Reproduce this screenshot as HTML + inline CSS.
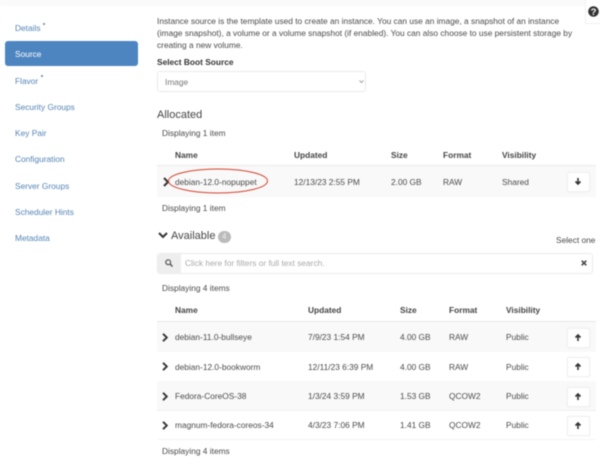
<!DOCTYPE html>
<html><head><meta charset="utf-8"><style>
html,body{margin:0;padding:0;background:#fff}
#p{position:relative;width:600px;height:468px;overflow:hidden;background:#fff;font-family:"Liberation Sans",sans-serif;font-size:8.35px;color:#4a4a4a;filter:blur(.4px)}
#p div{position:absolute}
.t{white-space:nowrap;line-height:12px;height:12px}
.n{color:#5585b5;font-size:8.35px}
.b{font-weight:bold;color:#444}
.h{font-size:11px;line-height:14px;height:14px;color:#444}
.row{left:157px;width:439px}
.btn{left:567px;width:21px;height:18px;background:#fff;border:1px solid #f0f0f0;border-radius:2px;box-shadow:0 0 1px #e4e4e4}
.dot{width:2px;height:2px;border-radius:1px;background:#5a7fa8}
svg{position:absolute;overflow:visible}
</style></head><body><div id="p">
<div style="left:0;top:0;width:600px;height:6px;background:#fafafa"></div>
<div style="left:585px;top:0;width:15px;height:23px;background:#fff;border-left:1px solid #f0f0f0;border-bottom:1px solid #f0f0f0"></div>
<svg style="left:588px;top:6px" width="11" height="11" viewBox="0 0 11 11"><circle cx="5.5" cy="5.5" r="5.3" fill="#333"/><text x="5.5" y="9" font-family="Liberation Sans" font-size="9.5" font-weight="bold" fill="#fff" text-anchor="middle">?</text></svg>

<div class="t n" style="left:15px;top:22px">Details</div><div class="dot" style="left:43px;top:23px"></div>
<div style="left:5px;top:41px;width:133px;height:25px;background:#4d85c0;border-radius:3px"></div>
<div class="t n" style="left:15px;top:48px;color:#fff">Source</div>
<div class="t n" style="left:15px;top:75px">Flavor</div><div class="dot" style="left:41px;top:75px"></div>
<div class="t n" style="left:15px;top:101px">Security Groups</div>
<div class="t n" style="left:15px;top:127px">Key Pair</div>
<div class="t n" style="left:15px;top:153px">Configuration</div>
<div class="t n" style="left:15px;top:180px">Server Groups</div>
<div class="t n" style="left:15px;top:206px">Scheduler Hints</div>
<div class="t n" style="left:15px;top:232px">Metadata</div>

<div class="t" style="left:157px;top:15px">Instance source is the template used to create an instance. You can use an image, a snapshot of an instance</div>
<div class="t" style="left:157px;top:27px">(image snapshot), a volume or a volume snapshot (if enabled). You can also choose to use persistent storage by</div>
<div class="t" style="left:157px;top:39px">creating a new volume.</div>
<div class="t b" style="left:157px;top:56px;color:#333">Select Boot Source</div>
<div style="left:157px;top:71px;width:207px;height:19px;border:1px solid #ebebeb;border-radius:3px"></div>
<div class="t" style="left:165px;top:76px;color:#777">Image</div>
<svg style="left:359px;top:80px" width="5" height="3" viewBox="0 0 5 3"><path d="M.5 .5L2.5 2.5L4.5 .5" fill="none" stroke="#888" stroke-width=".8"/></svg>

<div class="t h" style="left:157px;top:108px">Allocated</div>
<div class="t" style="left:162px;top:127px">Displaying 1 item</div>
<div class="t b" style="left:175px;top:149px">Name</div><div class="t b" style="left:294px;top:149px">Updated</div><div class="t b" style="left:391px;top:149px">Size</div><div class="t b" style="left:443px;top:149px">Format</div><div class="t b" style="left:502px;top:149px">Visibility</div>
<div class="row" style="top:165px;height:31px;background:#f9f9f9;border-top:1px solid #eaeaea"></div>
<svg style="left:163px;top:177px" width="7" height="10" viewBox="0 0 7 10"><path d="M1 1L5 5L1 9" fill="none" stroke="#333" stroke-width="2"/></svg>
<div class="t" style="left:175px;top:176px">debian-12.0-nopuppet</div>
<div class="t" style="left:294px;top:176px">12/13/23 2:55 PM</div><div class="t" style="left:391px;top:176px">2.00 GB</div><div class="t" style="left:443px;top:176px">RAW</div><div class="t" style="left:502px;top:176px">Shared</div>
<div class="btn" style="top:172px"></div>
<svg style="left:574px;top:177px" width="8" height="9" viewBox="0 0 8 9"><path d="M4 1V7M1.5 4.5L4 7L6.5 4.5" fill="none" stroke="#333" stroke-width="1.6"/></svg>
<svg style="left:168px;top:168px" width="101" height="26" viewBox="0 0 101 26"><ellipse cx="50" cy="13" rx="49.5" ry="12" fill="none" stroke="#d5432f" stroke-width="1"/></svg>
<div class="t" style="left:162px;top:202px">Displaying 1 item</div>

<svg style="left:158px;top:232px" width="10" height="7" viewBox="0 0 10 7"><path d="M1 1L5 5L9 1" fill="none" stroke="#333" stroke-width="2"/></svg>
<div class="t h" style="left:171px;top:229px">Available</div>
<div style="left:218px;top:231px;width:13px;height:12px;background:#bbb;border-radius:6px"></div>
<div class="t" style="left:222px;top:231px;color:#eee;font-size:8px">4</div>
<div class="t" style="left:556px;top:234px">Select one</div>
<div style="left:157px;top:253px;width:434px;height:19px;border:1px solid #ebebeb;border-radius:3px"></div>
<div style="left:158px;top:254px;width:23px;height:19px;background:#eee;border-radius:3px 0 0 3px"></div>
<svg style="left:165px;top:259px" width="8" height="8" viewBox="0 0 8 8"><circle cx="3.2" cy="3.2" r="2.4" fill="none" stroke="#555" stroke-width="1.2"/><path d="M5 5L7.5 7.5" stroke="#555" stroke-width="1.5"/></svg>
<div class="t" style="left:185px;top:257px;color:#aaa">Click here for filters or full text search.</div>
<svg style="left:581px;top:260px" width="6" height="6" viewBox="0 0 6 6"><path d="M.7 .7L5.3 5.3M5.3 .7L.7 5.3" stroke="#444" stroke-width="1.5"/></svg>
<div class="t" style="left:162px;top:282px">Displaying 4 items</div>
<div class="t b" style="left:175px;top:304px">Name</div><div class="t b" style="left:308px;top:304px">Updated</div><div class="t b" style="left:400px;top:304px">Size</div><div class="t b" style="left:449px;top:304px">Format</div><div class="t b" style="left:506px;top:304px">Visibility</div>

<div class="row" style="top:321px;height:30px;background:#f9f9f9;border-top:1px solid #e8e8e8"></div>
<div class="row" style="top:381px;height:29px;background:#f9f9f9;border-bottom:1px solid #f0f0f0"></div>

<svg style="left:162px;top:333px" width="7" height="9" viewBox="0 0 7 9"><path d="M1 .8L4.8 4.5L1 8.2" fill="none" stroke="#333" stroke-width="1.9"/></svg>
<div class="t" style="left:175px;top:331px">debian-11.0-bullseye</div><div class="t" style="left:308px;top:331px">7/9/23 1:54 PM</div><div class="t" style="left:400px;top:331px">4.00 GB</div><div class="t" style="left:449px;top:331px">RAW</div><div class="t" style="left:506px;top:331px">Public</div>
<div class="btn" style="top:328px"></div>
<svg style="left:574px;top:333px" width="8" height="9" viewBox="0 0 8 9"><path d="M4 8V2M1.5 4.5L4 2L6.5 4.5" fill="none" stroke="#333" stroke-width="1.6"/></svg>

<svg style="left:162px;top:362px" width="7" height="9" viewBox="0 0 7 9"><path d="M1 .8L4.8 4.5L1 8.2" fill="none" stroke="#333" stroke-width="1.9"/></svg>
<div class="t" style="left:175px;top:361px">debian-12.0-bookworm</div><div class="t" style="left:308px;top:361px">12/11/23 6:39 PM</div><div class="t" style="left:400px;top:361px">4.00 GB</div><div class="t" style="left:449px;top:361px">RAW</div><div class="t" style="left:506px;top:361px">Public</div>
<div class="btn" style="top:357px"></div>
<svg style="left:574px;top:362px" width="8" height="9" viewBox="0 0 8 9"><path d="M4 8V2M1.5 4.5L4 2L6.5 4.5" fill="none" stroke="#333" stroke-width="1.6"/></svg>

<svg style="left:162px;top:392px" width="7" height="9" viewBox="0 0 7 9"><path d="M1 .8L4.8 4.5L1 8.2" fill="none" stroke="#333" stroke-width="1.9"/></svg>
<div class="t" style="left:175px;top:390px">Fedora-CoreOS-38</div><div class="t" style="left:308px;top:390px">1/3/24 3:59 PM</div><div class="t" style="left:400px;top:390px">1.53 GB</div><div class="t" style="left:449px;top:390px">QCOW2</div><div class="t" style="left:506px;top:390px">Public</div>
<div class="btn" style="top:387px"></div>
<svg style="left:574px;top:392px" width="8" height="9" viewBox="0 0 8 9"><path d="M4 8V2M1.5 4.5L4 2L6.5 4.5" fill="none" stroke="#333" stroke-width="1.6"/></svg>

<svg style="left:162px;top:421px" width="7" height="9" viewBox="0 0 7 9"><path d="M1 .8L4.8 4.5L1 8.2" fill="none" stroke="#333" stroke-width="1.9"/></svg>
<div class="t" style="left:175px;top:419px">magnum-fedora-coreos-34</div><div class="t" style="left:308px;top:419px">4/3/23 7:06 PM</div><div class="t" style="left:400px;top:419px">1.41 GB</div><div class="t" style="left:449px;top:419px">QCOW2</div><div class="t" style="left:506px;top:419px">Public</div>
<div class="btn" style="top:416px"></div>
<svg style="left:574px;top:421px" width="8" height="9" viewBox="0 0 8 9"><path d="M4 8V2M1.5 4.5L4 2L6.5 4.5" fill="none" stroke="#333" stroke-width="1.6"/></svg>
<div class="row" style="top:439px;height:1px;background:#f4f4f4"></div>
<div class="t" style="left:162px;top:445px">Displaying 4 items</div>
</div></body></html>
